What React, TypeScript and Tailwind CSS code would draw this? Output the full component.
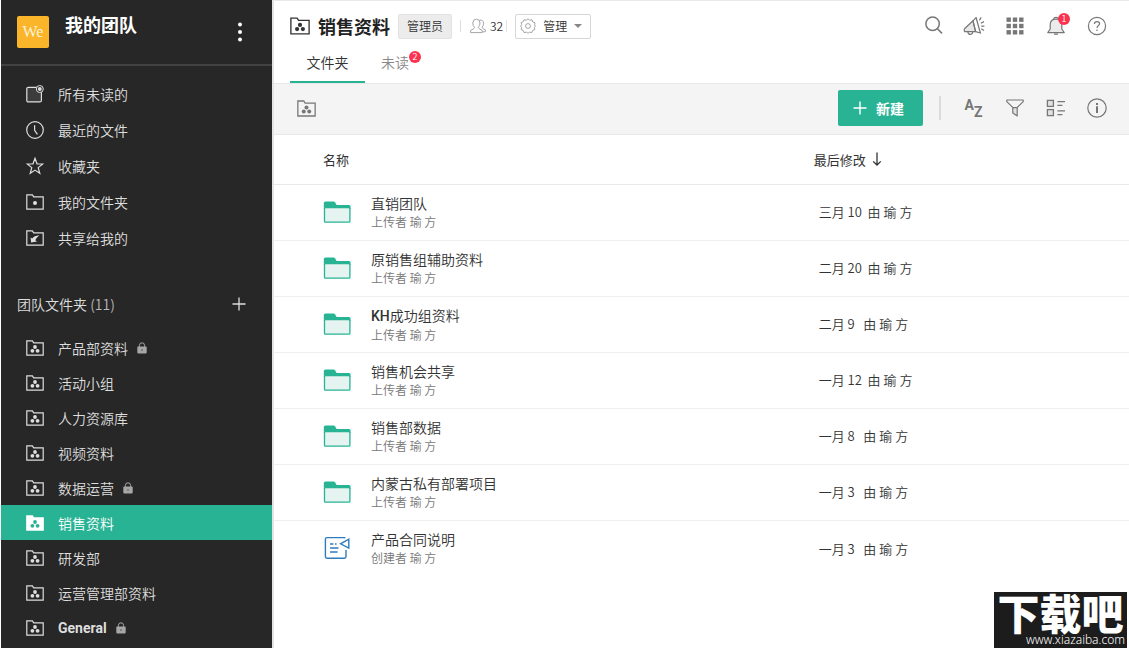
import React from 'react';

type FolderMark = 'team' | 'dot' | 'share';

interface TeamFolder {
  name: string;
  locked?: boolean;
  latin?: boolean;
}

interface FileRow {
  prefix?: string;
  name: string;
  by: string;
  modified: string;
  kind: 'folder' | 'note';
}

const TEAM_FOLDERS: TeamFolder[] = [
  { name: '产品部资料', locked: true },
  { name: '活动小组' },
  { name: '人力资源库' },
  { name: '视频资料' },
  { name: '数据运营', locked: true },
  { name: '销售资料' },
  { name: '研发部' },
  { name: '运营管理部资料' },
  { name: 'General', locked: true, latin: true }
];

const ROWS: FileRow[] = [
  { name: '直销团队', by: '上传者 瑜 方', modified: '三月 10  由 瑜 方', kind: 'folder' },
  { name: '原销售组辅助资料', by: '上传者 瑜 方', modified: '二月 20  由 瑜 方', kind: 'folder' },
  { prefix: 'KH', name: '成功组资料', by: '上传者 瑜 方', modified: '二月 9   由 瑜 方', kind: 'folder' },
  { name: '销售机会共享', by: '上传者 瑜 方', modified: '一月 12  由 瑜 方', kind: 'folder' },
  { name: '销售部数据', by: '上传者 瑜 方', modified: '一月 8   由 瑜 方', kind: 'folder' },
  { name: '内蒙古私有部署项目', by: '上传者 瑜 方', modified: '一月 3   由 瑜 方', kind: 'folder' },
  { name: '产品合同说明', by: '创建者 瑜 方', modified: '一月 3   由 瑜 方', kind: 'note' }
];

function FolderIcon({ mark = 'team', solid = false, className = 'w-[18px] h-4' }: { mark?: FolderMark; solid?: boolean; className?: string }) {
  return (
    <svg viewBox="0 0 18 16" className={`shrink-0 ${className}`} fill={solid ? 'currentColor' : 'none'} stroke="currentColor" strokeWidth="1.2" aria-hidden="true">
      <path d="M.8 .9h5.6l1.3 2h9.5v12.2H.8z" />
      {mark === 'team' && (
        <g fill={solid ? '#29b395' : 'currentColor'} stroke="none">
          <circle cx="9" cy="7" r="1.9" />
          <circle cx="6.4" cy="10.8" r="1.9" />
          <circle cx="11.6" cy="10.8" r="1.9" />
        </g>
      )}
      {mark === 'dot' && <circle cx="9" cy="9" r="2" fill="currentColor" stroke="none" />}
      {mark === 'share' && (
        <path d="M4.6 7.4l1.6 1.1C7.5 6.6 9.6 5.5 13.4 5.2 12.2 6.6 10.5 7.6 9.3 10.2l1.8 1.3-6 .9z" fill="currentColor" stroke="none" />
      )}
    </svg>
  );
}

function UnreadIcon() {
  return (
    <svg viewBox="0 0 18 18" className="w-[18px] h-[18px] shrink-0" fill="none" stroke="currentColor" aria-hidden="true">
      <rect x=".8" y="2.3" width="14.6" height="14.6" rx="1.5" fill="#3c3c3c" strokeWidth="1.2" />
      <circle cx="13.8" cy="4" r="3.5" fill="#272727" />
      <circle cx="13.8" cy="4" r="2" fill="currentColor" stroke="none" />
    </svg>
  );
}

function ClockIcon() {
  return (
    <svg viewBox="0 0 18 18" className="w-[18px] h-[18px] shrink-0" fill="none" stroke="currentColor" strokeWidth="1.2" aria-hidden="true">
      <circle cx="9" cy="9" r="8.3" />
      <path d="M8.6 4.2v5.2l2.8 4" />
    </svg>
  );
}

function StarIcon() {
  return (
    <svg viewBox="0 0 18 18" className="w-[18px] h-[18px] shrink-0" fill="none" stroke="currentColor" strokeWidth="1.2" aria-hidden="true">
      <path d="M9 1.3l2 5.5 5.8.2-4.6 3.6 1.6 5.7L9 13.1l-4.8 3.2 1.6-5.7L1.2 7l5.8-.2z" />
    </svg>
  );
}

function LockIcon() {
  return (
    <svg viewBox="0 0 10 12" className="w-[10px] h-3 shrink-0 text-[#a6a6a6]" aria-hidden="true">
      <path d="M2.4 5V3.4a2.6 2.6 0 015.2 0V5" fill="none" stroke="currentColor" />
      <rect x=".3" y="4.6" width="9.4" height="6.8" rx=".8" fill="currentColor" />
      <circle cx="5" cy="8" r=".8" fill="#4b4b4b" />
    </svg>
  );
}

function GreenFolder() {
  return (
    <svg viewBox="0 0 28 22" className="w-7 h-[22px] shrink-0" aria-hidden="true">
      <path d="M.8 7V2Q.8.4 2.4.4h8.2Q11.6.4 12.2 1.4L13.6 4H26q1.6 0 1.6 1.6V8H.8z" fill="#29b395" />
      <rect x="1.5" y="6.6" width="25.4" height="14.6" rx="1" fill="#e5f3f1" stroke="#29b395" strokeWidth="1.3" />
    </svg>
  );
}

function NoteIcon() {
  return (
    <svg viewBox="0 0 28 24" className="w-7 h-6 shrink-0" fill="none" stroke="#2f7cbd" strokeWidth="1.4" aria-hidden="true">
      <path d="M22.4 2.2Q22 1.6 21 1.6H4Q2.4 1.6 2.4 3.2v17.4q0 1.6 1.6 1.6h17.4q1.6 0 1.6-1.6V14" />
      <path d="M25.8 3.2v9L17.6 7.8z" />
      <path d="M7 8h3.4M12 8h1.6M7 12h8.4M7 16h7.6" />
    </svg>
  );
}

const QUICK_LINKS = [
  { name: '所有未读的', icon: <UnreadIcon /> },
  { name: '最近的文件', icon: <ClockIcon /> },
  { name: '收藏夹', icon: <StarIcon /> },
  { name: '我的文件夹', icon: <FolderIcon mark="dot" /> },
  { name: '共享给我的', icon: <FolderIcon mark="share" /> }
];

function Sidebar() {
  return (
    <aside className="w-[271px] shrink-0 bg-[#272727] text-[#dedede]">
      <div className="h-[66px] flex items-center border-b-2 border-[#414141] pl-4 pr-[26px]">
        <div className="w-8 h-8 rounded-xs bg-[#fab52b] text-[#fff3d6] flex items-center justify-center font-['Liberation_Serif',serif] text-base">We</div>
        <h1 className="flex-1 ml-4 mb-4 text-lg leading-6 font-bold text-white">我的团队</h1>
        <button type="button" aria-label="More" className="text-white">
          <svg viewBox="0 0 12 20" className="w-3 h-5" fill="currentColor">
            <circle cx="6" cy="2.6" r="2" />
            <circle cx="6" cy="10" r="2" />
            <circle cx="6" cy="17.4" r="2" />
          </svg>
        </button>
      </div>

      <nav className="pt-[10px]">
        {QUICK_LINKS.map((link) => (
          <a key={link.name} href="#" className="h-9 flex items-center gap-[14px] pl-[25px] text-sm">
            {link.icon}
            {link.name}
          </a>
        ))}
      </nav>

      <div className="h-10 mt-7 pl-4 pr-[26px] flex items-center justify-between">
        <h2 className="text-sm">团队文件夹 <span className="text-[#b8b8b8]">(11)</span></h2>
        <button type="button" aria-label="Add">
          <svg viewBox="0 0 14 14" className="w-[14px] h-[14px]" stroke="currentColor" strokeWidth="1.3">
            <path d="M7 .5v13M.5 7h13" />
          </svg>
        </button>
      </div>

      <nav className="pt-[6px]">
        {TEAM_FOLDERS.map((folder) => {
          const active = folder.name === '销售资料';
          return (
            <a
              key={folder.name}
              href="#"
              className={`h-[35px] flex items-center pl-[25px] text-sm ${active ? 'bg-[#29b395] text-white' : ''}`}
            >
              <FolderIcon solid={active} />
              <span className={`ml-[14px] mr-[9px] ${folder.latin ? "font-['Roboto',sans-serif] font-bold" : ''}`}>{folder.name}</span>
              {folder.locked && <LockIcon />}
            </a>
          );
        })}
      </nav>
    </aside>
  );
}

function IconButton({ label, children }: { label: string; children: React.ReactNode }) {
  return (
    <button type="button" aria-label={label} className="relative w-[41px] h-8 flex items-center justify-center text-[#777]">
      {children}
    </button>
  );
}

function TopIcons() {
  return (
    <div className="ml-auto flex items-center">
      <IconButton label="Search">
        <svg viewBox="0 0 20 20" className="w-5 h-5" fill="none" stroke="currentColor" strokeWidth="1.5">
          <circle cx="9.6" cy="7.8" r="6.7" />
          <path d="M14.4 12.8l4.6 4.6" />
        </svg>
      </IconButton>
      <IconButton label="News">
        <svg viewBox="0 0 22 20" className="w-[22px] h-5" fill="none" stroke="currentColor" strokeWidth="1.2" strokeLinejoin="round">
          <path d="M10 4.8L2 12.2q-1.4 1.6-.4 3.4h11z" fill="#e8e8e8" />
          <path d="M10 4.8l3-3.2L17.4 17l-4.8-1.4zM13 1.2L17.6 17.6" />
          <path d="M4.8 15.8q.4 2.6 2.6 2.6t2.4-2.6M16.4 4.4l1.8-3M17.8 7.2l3.2-1.6M18.2 10.2h3.2M18.2 12.8l2.8 1.6" />
        </svg>
      </IconButton>
      <IconButton label="Apps">
        <svg viewBox="0 0 18 18" className="w-[18px] h-[18px]" fill="currentColor">
          {[0.5, 6.8, 13.1].map((y) => [0.5, 6.8, 13.1].map((x) => <rect key={`${x}-${y}`} x={x} y={y} width="4.4" height="4.4" />))}
        </svg>
      </IconButton>
      <IconButton label="Notifications">
        <svg viewBox="0 0 18 20" className="w-[18px] h-5" fill="none" stroke="currentColor" strokeWidth="1.2" strokeLinejoin="round">
          <path d="M7 18.2h4M6.6 3.2Q7 1.4 9 1.4t2.4 1.8" />
          <path d="M3.2 13V8.6Q3.4 3.2 9 3.2t5.8 5.4V13l2.4 3.6H.8z" fill="#ebebeb" />
        </svg>
        <span className="absolute top-[3px] right-[6px] w-3 h-3 rounded-full bg-[#fc3350] text-white text-[9px] leading-3 text-center">1</span>
      </IconButton>
      <IconButton label="Help">
        <svg viewBox="0 0 20 20" className="w-5 h-5" fill="none" stroke="currentColor" strokeWidth="1.2">
          <circle cx="10" cy="10" r="8.6" />
          <path d="M7.4 8Q7.4 5.6 10 5.6t2.6 2.2C12.6 9.6 10 9.6 10 12" />
          <path d="M10 13.4v1.6" />
        </svg>
      </IconButton>
    </div>
  );
}

function Toolbar() {
  return (
    <div className="h-[51px] flex items-center bg-[#f4f4f4] border-b border-[#e8e8e8] pl-[23px] pr-3 pb-[2px]">
      <FolderIcon className="w-[19px] h-[17px] text-[#777]" />
      <button type="button" className="ml-auto w-[85px] h-9 rounded-xs bg-[#29b395] text-white text-sm font-bold flex items-center justify-center gap-[9px] pr-1">
        <svg viewBox="0 0 14 14" className="w-[14px] h-[14px]" stroke="currentColor" strokeWidth="1.4" aria-hidden="true">
          <path d="M7 .5v13M.5 7h13" />
        </svg>
        新建
      </button>
      <div className="ml-4 mr-3 w-[2px] h-6 bg-[#dcdcdc]" />
      <IconButton label="Sort">
        <span className="flex font-['Roboto',sans-serif] font-bold text-sm leading-3">
          <span className="pb-1">A</span>
          <span className="pt-[7px]">Z</span>
        </span>
      </IconButton>
      <IconButton label="Filter">
        <svg viewBox="0 0 18 18" className="w-[18px] h-[18px]" fill="none" stroke="currentColor" strokeWidth="1.2" strokeLinejoin="round">
          <path d="M.8 1h16.4v1.6L11 8.6H7L.8 2.6z" />
          <path d="M6.8 8.6h4.4V17l-4.4-3z" fill="#e2e2e2" />
        </svg>
      </IconButton>
      <IconButton label="View">
        <svg viewBox="0 0 20 18" className="w-5 h-[18px]" fill="none" stroke="currentColor" strokeWidth="1.3">
          <rect x="1.4" y="1.4" width="6" height="6" fill="#e2e2e2" />
          <rect x="1.4" y="10.6" width="6" height="6" fill="#e2e2e2" />
          <path d="M11.4 2.6H19M11.4 6.4h5M11.4 11.8H19M11.4 15.6h5" />
        </svg>
      </IconButton>
      <IconButton label="Info">
        <svg viewBox="0 0 20 20" className="w-5 h-5" fill="none" stroke="currentColor" strokeWidth="1.2">
          <circle cx="10" cy="10" r="9.2" />
          <path d="M10 8.2V15" strokeWidth="2" />
          <path d="M10 5v2" strokeWidth="2" />
        </svg>
      </IconButton>
    </div>
  );
}

function FileTable() {
  return (
    <table className="w-full text-left text-[#333]">
      <thead>
        <tr className="h-[49px] border-b border-[#e8e8e8] text-[13px]">
          <th className="w-[63%] pl-[49px] font-normal">名称</th>
          <th className="pl-px font-normal" aria-sort="descending">
            <span className="flex items-center gap-[6px]">
              最后修改
              <svg viewBox="0 0 10 14" className="w-[10px] h-[14px]" fill="none" stroke="currentColor" strokeWidth="1.3" aria-hidden="true">
                <path d="M5 .5v12.4M1.2 9.4L5 13l3.8-3.6" />
              </svg>
            </span>
          </th>
        </tr>
      </thead>
      <tbody>
        {ROWS.map((row) => (
          <tr key={row.name} className="h-14 border-b border-[#f0f0f0] last:border-0">
            <td className="pl-[49px]">
              <div className="flex items-center gap-5">
                {row.kind === 'folder' ? <GreenFolder /> : <NoteIcon />}
                <div>
                  <a href="#" className="block text-sm">
                    {row.prefix && <span className="font-['Roboto',sans-serif] font-medium">{row.prefix}</span>}
                    {row.name}
                  </a>
                  <p className="text-xs leading-[18px] text-[#777]">{row.by}</p>
                </div>
              </div>
            </td>
            <td className="pl-[6px] text-[13px] whitespace-pre">{row.modified}</td>
          </tr>
        ))}
      </tbody>
    </table>
  );
}

export default function App() {
  return (
    <div className="relative min-h-screen flex bg-white pl-px font-['Noto_Sans_CJK_SC','Noto_Sans',sans-serif] font-[350]">
      <Sidebar />
      <main className="flex-1 min-w-0 border-l-2 border-t border-l-[#e4e4e4] border-t-[#e8e8e8]">
        <header className="border-b border-[#e8e8e8]">
          <div className="h-[50px] flex items-center pl-4 pr-3">
            <FolderIcon className="w-5 h-[18px] text-[#333]" />
            <h2 className="ml-2 text-lg font-bold text-[#222]">销售资料</h2>
            <span className="ml-2 h-[25px] px-2 flex items-center rounded-xs border border-[#e2e2e2] bg-[#ececec] text-xs text-[#333]">管理员</span>
            <span className="ml-2 h-3 w-px bg-[#ddd]" />
            <svg viewBox="0 0 16 16" className="ml-[9px] w-4 h-4" fill="#fff" stroke="#a5a5a5" aria-hidden="true">
              <path d="M9.4 2.2q4-.8 4.2 3-.2 3-1.6 4 .2 1.4 3.4 2.6v2H9" />
              <path d="M6.4 1.2q3.6 0 3.6 3.8 0 3-1.8 4.4.2 1.4 4 3v2.2H.6v-2.2q3.8-1.6 4-3Q2.8 8 2.8 5q0-3.8 3.6-3.8z" />
            </svg>
            <span className="ml-1 text-xs text-[#333]">32</span>
            <span className="ml-[3px] h-3 w-px bg-[#e4e4e4]" />
            <button type="button" className="ml-2 h-[25px] w-[76px] flex items-center justify-between pl-1 pr-2 rounded-xs border border-[#d6d6d6] text-xs text-[#333]">
              <svg viewBox="0 0 16 16" className="w-4 h-4" fill="none" stroke="#a5a5a5" aria-hidden="true">
                <path d="M8 .8l1.6 1.4 2.4-.4.8 2.2 2.2.8-.4 2L15.4 8l-1 1.6.4 2-2.2.8-.8 2.2-2.2-.4L8 15.2l-1.6-1-2.4.4-.8-2.2-2-.8.4-2L.6 8l1-1.4-.4-2 2-.8L4 1.8l2.4.4z" />
                <circle cx="8" cy="8" r="2.4" />
              </svg>
              管理
              <svg viewBox="0 0 8 4" className="w-2 h-1" fill="#888" aria-hidden="true">
                <path d="M0 0h8L4 4z" />
              </svg>
            </button>
            <TopIcons />
          </div>
          <div className="flex h-8 pl-4 text-sm">
            <button type="button" className="w-[75px] pb-2 border-b-2 border-[#29b395] text-[#333]">文件夹</button>
            <button type="button" className="relative ml-4 pb-[10px] text-[#888]">
              未读
              <span className="absolute top-0 left-7 w-3 h-3 rounded-full bg-[#fc3350] text-white text-[9px] leading-3 text-center">2</span>
            </button>
          </div>
        </header>
        <Toolbar />
        <FileTable />
      </main>

      {/* Site badge over the lower right corner */}
      <div className="absolute right-[2px] bottom-0 w-[133px] h-14 bg-[#1c1c1c] text-white">
        <div className="text-[42px] leading-10 text-center font-black whitespace-nowrap">下载吧</div>
        <div className="pr-[2px] text-right font-['Noto_Sans',sans-serif] text-xs leading-4">www.xiazaiba.com</div>
      </div>
    </div>
  );
}
